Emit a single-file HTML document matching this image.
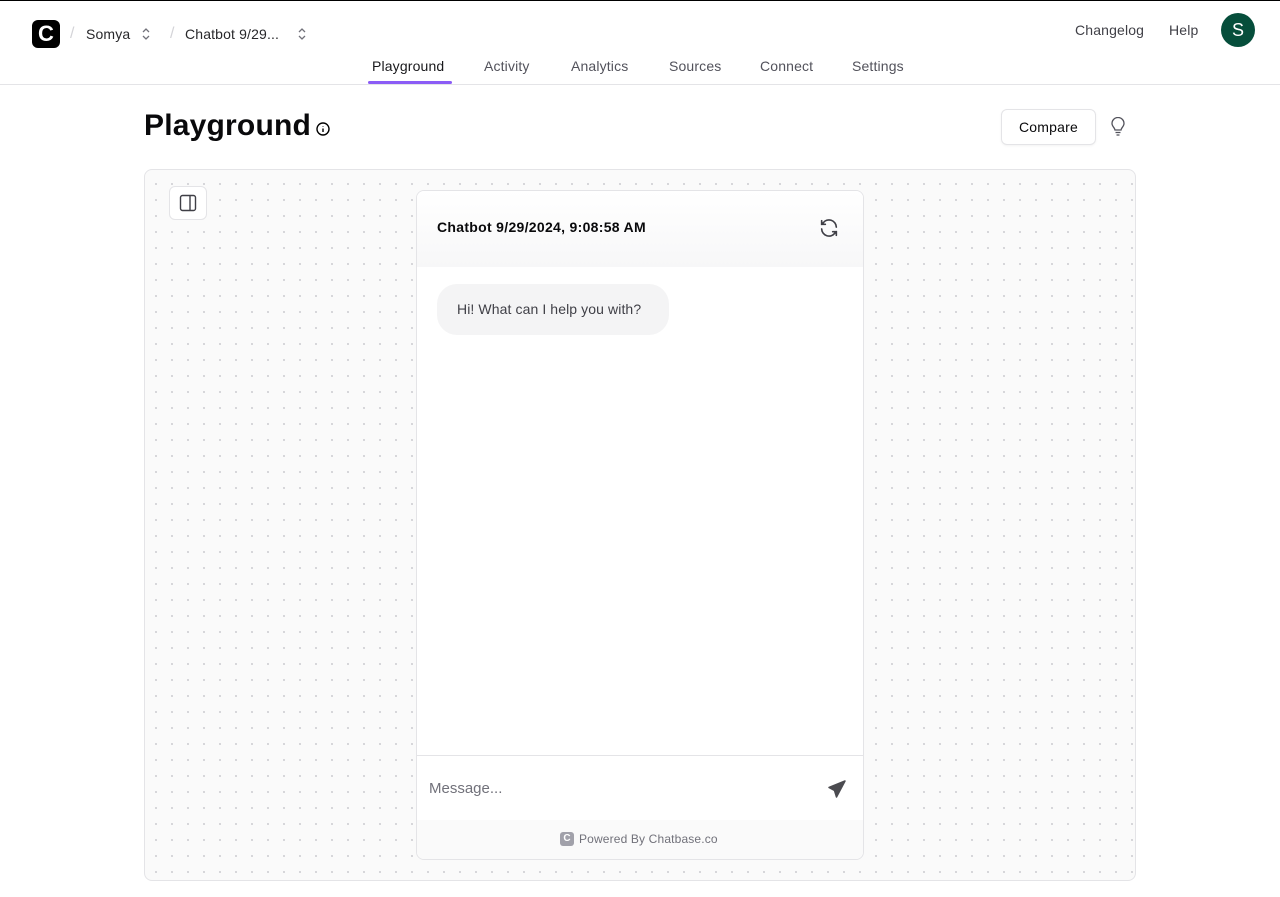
<!DOCTYPE html>
<html><head><meta charset="utf-8"><style>
*{box-sizing:border-box;margin:0;padding:0}
body{width:1280px;height:897px;background:#fff;font-family:"Liberation Sans",sans-serif;color:#09090b;position:relative;overflow:hidden}
.a{position:absolute}
.nav{font-size:14px;color:#52525b;letter-spacing:0.15px}
</style></head><body>
<div class="a" style="left:0;top:0;width:1280px;height:1px;background:#000"></div>
<div class="a" style="left:32px;top:20px;width:28px;height:28px;background:#000;border-radius:6px;color:#fff;font-weight:bold;font-size:22px;text-align:center;line-height:28px">C</div>
<div class="a" style="left:70px;top:25px;color:#d4d4d8;font-size:16px">/</div>
<div class="a" style="left:86px;top:26px;font-size:14px;color:#27272a;letter-spacing:0.15px">Somya</div>
<svg class="a" style="left:140px;top:27px" width="12" height="14" viewBox="0 0 12 14" fill="none" stroke="#71717a" stroke-width="1.3"><path d="M3 5l3-3 3 3M3 9l3 3 3-3"/></svg>
<div class="a" style="left:170px;top:25px;color:#d4d4d8;font-size:16px">/</div>
<div class="a" style="left:185px;top:26px;font-size:14px;color:#27272a;letter-spacing:0.15px">Chatbot 9/29...</div>
<svg class="a" style="left:296px;top:27px" width="12" height="14" viewBox="0 0 12 14" fill="none" stroke="#71717a" stroke-width="1.3"><path d="M3 5l3-3 3 3M3 9l3 3 3-3"/></svg>
<div class="a nav" style="left:372px;top:58px;color:#18181b">Playground</div>
<div class="a" style="left:368px;top:81px;width:84px;height:3px;background:#8b5cf6;border-radius:2px"></div>
<div class="a nav" style="left:484px;top:58px">Activity</div>
<div class="a nav" style="left:571px;top:58px">Analytics</div>
<div class="a nav" style="left:669px;top:58px">Sources</div>
<div class="a nav" style="left:760px;top:58px">Connect</div>
<div class="a nav" style="left:852px;top:58px">Settings</div>
<div class="a nav" style="left:1075px;top:22px;color:#3f3f46">Changelog</div>
<div class="a nav" style="left:1169px;top:22px;color:#3f3f46">Help</div>
<div class="a" style="left:1221px;top:13px;width:34px;height:34px;border-radius:50%;background:#064e3b;color:#fff;font-size:18px;text-align:center;line-height:34px">S</div>
<div class="a" style="left:0;top:84px;width:1280px;height:1px;background:#e4e4e7"></div>
<div class="a" style="left:144px;top:109px;font-size:30px;font-weight:bold;letter-spacing:0.2px">Playground</div>
<svg class="a" style="left:315px;top:121px" width="16" height="16" viewBox="0 0 16 16" fill="none" stroke="#000" stroke-width="1.4"><circle cx="8" cy="8" r="6"/><path d="M8 7.5v3.5M8 5v.5"/></svg>
<div class="a" style="left:1001px;top:109px;width:95px;height:36px;border:1px solid #e4e4e7;border-radius:6px;font-size:14px;text-align:center;line-height:35px;letter-spacing:0.2px;box-shadow:0 1px 2px rgba(0,0,0,.05)">Compare</div>
<svg class="a" style="left:1109px;top:117px" width="18" height="20" viewBox="0 0 18 20" fill="none" stroke="#52525b" stroke-width="1.3"><path d="M6 13c0-2-3-3.5-3-6.5a6 6 0 0112 0c0 3-3 4.5-3 6.5z"/><path d="M6.5 15.5h5M7.5 18h3"/></svg>
<div class="a" style="left:144px;top:169px;width:992px;height:712px;border:1px solid #e4e4e7;border-radius:8px;background-color:#fafafa;background-image:radial-gradient(circle,#d4d4d8 1px,transparent 1.2px);background-size:16px 16px;background-position:3px 6px"></div>
<div class="a" style="left:169px;top:186px;width:38px;height:34px;border:1px solid #e4e4e7;border-radius:6px;background:#fff"></div>
<svg class="a" style="left:179px;top:194px" width="18" height="18" viewBox="0 0 18 18" fill="none" stroke="#3f3f46" stroke-width="1.4"><rect x="1.5" y="1.5" width="15" height="15" rx="2"/><path d="M11 1.5v15"/></svg>
<div class="a" style="left:416px;top:190px;width:448px;height:670px;background:#fff;border:1px solid #e4e4e7;border-radius:8px;overflow:hidden">
<div style="height:76px;background:linear-gradient(#fff,#f7f7f8)"></div>
<div class="a" style="left:20px;top:28px;font-size:14px;font-weight:bold;letter-spacing:0.3px">Chatbot 9/29/2024, 9:08:58 AM</div>
<svg class="a" style="left:401px;top:26px" width="22" height="22" viewBox="0 0 24 24" fill="none" stroke="#3f3f46" stroke-width="1.8" stroke-linecap="round"><path d="M20 11a8 8 0 00-14.5-4.5L4 8M4 4v4h4M4 13a8 8 0 0014.5 4.5L20 16M20 20v-4h-4"/></svg>
<div class="a" style="left:20px;top:93px;width:232px;height:51px;background:#f4f4f5;border-radius:20px;font-size:14px;color:#3f3f46;line-height:51px;padding-left:20px;letter-spacing:0.1px">Hi! What can I help you with?</div>
<div class="a" style="left:0;top:564px;width:448px;height:1px;background:#e4e4e7"></div>
<div class="a" style="left:12px;top:589px;font-size:15px;color:#71717a">Message...</div>
<svg class="a" style="left:410px;top:588px" width="20" height="20" viewBox="0 0 20 20"><path d="M18 2L2 8.5l5.5 3 2 6.5z" fill="#4b4b50" stroke="#4b4b50" stroke-width="1.5" stroke-linejoin="round"/></svg>
<div class="a" style="left:0;top:629px;width:448px;height:41px;background:#fafafa"></div>
<div class="a" style="left:143px;top:641px;width:14px;height:14px;background:#a1a1aa;border-radius:3px;color:#fff;font-size:10px;font-weight:bold;text-align:center;line-height:14px">C</div>
<div class="a" style="left:162px;top:641px;font-size:12px;color:#71717a;letter-spacing:0.15px">Powered By Chatbase.co</div>
</div>
</body></html>
